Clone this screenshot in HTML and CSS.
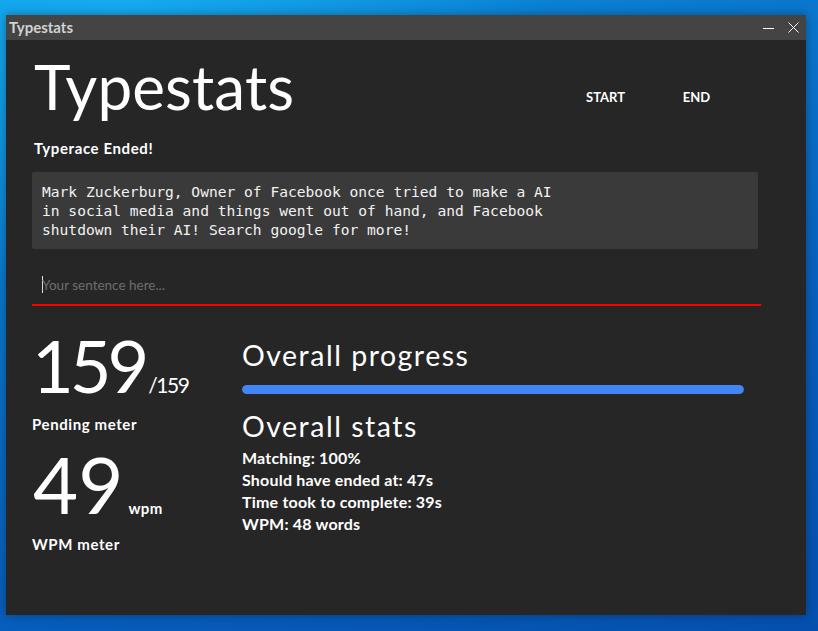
FILE: index.html
```html
<!DOCTYPE html>
<html lang="en">
<head>
<meta charset="utf-8">
<title>Typestats</title>
<link rel="stylesheet" href="styles.css">
</head>
<body>
<div class="window">
  <div class="titlebar">
    <span class="titlebar-text">Typestats</span>
    <div class="controls">
      <svg class="ctl" width="11" height="11" viewBox="0 0 11 11"><line x1="0" y1="6.5" x2="11" y2="6.5" stroke="#fff" stroke-width="1"/></svg>
      <svg class="ctl" width="11" height="11" viewBox="0 0 11 11"><path d="M0.5 0.5 L10.5 10.5 M10.5 0.5 L0.5 10.5" stroke="#fff" stroke-width="1" fill="none"/></svg>
    </div>
  </div>
  <div class="content">
    <header class="header">
      <h1 class="app-title">Typestats</h1>
      <nav class="nav">
        <span class="nav-btn">START</span>
        <span class="nav-btn">END</span>
      </nav>
    </header>
    <p class="status">Typerace Ended!</p>
    <div class="sentence-box">
      <p class="sentence">Mark Zuckerburg, Owner of Facebook once tried to make a AI in social media and things went out of hand, and Facebook shutdown their AI! Search google for more!</p>
    </div>
    <div class="input-row">
      <span class="caret"></span><span class="placeholder">Your sentence here...</span>
    </div>
    <section class="stats">
      <div class="meters">
        <div class="meter-value"><span class="big big-pending">159</span><span class="small-unit">/159</span></div>
        <div class="meter-label">Pending meter</div>
        <div class="meter-value meter-wpm"><span class="big big-wpm">49</span><span class="wpm-unit">wpm</span></div>
        <div class="meter-label">WPM meter</div>
      </div>
      <div class="overall">
        <h2 class="section-title">Overall progress</h2>
        <div class="progress"><div class="progress-fill" style="width:100%"></div></div>
        <h2 class="section-title title-stats">Overall stats</h2>
        <ul class="stat-list">
          <li>Matching: 100%</li>
          <li>Should have ended at: 47s</li>
          <li>Time took to complete: 39s</li>
          <li>WPM: 48 words</li>
        </ul>
      </div>
    </section>
  </div>
</div>
</body>
</html>
```
FILE: styles.css
```css
* { box-sizing: border-box; }
html, body { margin: 0; padding: 0; }
body {
  width: 818px;
  height: 631px;
  overflow: hidden;
  font-family: Lato, "Open Sans", sans-serif;
  background:
    radial-gradient(ellipse 420px 300px at 120px 0px, rgba(30,190,255,0.55), rgba(30,190,255,0) 100%),
    linear-gradient(160deg, #0c98e2 0%, #0a78cf 30%, #075fbd 65%, #0550ae 100%);
  padding: 15px 0 0 6px;
}
.window {
  width: 800px;
  height: 600px;
  background: #262626;
  box-shadow: 0 0 10px rgba(0,0,0,0.35);
  display: flex;
  flex-direction: column;
}
.titlebar {
  height: 25px;
  background: #444444;
  display: flex;
  align-items: center;
  padding: 0 7px 0 3px;
  flex: none;
}
.titlebar-text {
  color: #d2d2d2;
  font-weight: 700;
  font-size: 15px;
  line-height: 25px;
}
.controls {
  margin-left: auto;
  display: flex;
  align-items: center;
  gap: 14px;
}
.ctl { display: block; }
.content {
  padding: 15px 45px 0 26px;
  color: #fff;
}
.header {
  display: flex;
  align-items: flex-start;
}
.app-title {
  margin: 0 0 0 2px;
  font-size: 62px;
  font-weight: 400;
  line-height: 62px;
  letter-spacing: 0.1px;
}
.nav {
  margin-left: auto;
  margin-right: 19px;
  margin-top: 34px;
  display: flex;
}
.nav-btn {
  width: 91px;
  text-align: center;
  font-size: 13px;
  font-weight: 700;
  line-height: 16px;
}
.status {
  margin: 22px 0 0 2px;
  font-size: 15px;
  font-weight: 700;
  line-height: 18px;
  letter-spacing: 0.6px;
}
.sentence-box {
  margin: 15px 3px 0 0;
  background: #3a3a3a;
  border-radius: 2px;
  padding: 10px 10px;
  height: 77px;
}
.sentence {
  margin: 0;
  max-width: 59ch;
  font-family: "DejaVu Sans Mono", "Liberation Mono", monospace;
  font-size: 14.6px;
  line-height: 19px;
  color: #f2f2f2;
}
.input-row {
  margin-top: 16px;
  height: 41px;
  border-bottom: 2px solid #ff0000;
  display: flex;
  align-items: center;
  padding: 0 0 0 10px;
}
.caret {
  width: 1px;
  height: 17px;
  background: #ddd;
  margin-right: -1px;
}
.placeholder {
  color: #6e6e6e;
  font-size: 13.5px;
}
.stats {
  display: flex;
}
.meters {
  width: 210px;
  flex: none;
}
.meter-value {
  margin-top: 23px;
  display: flex;
  align-items: baseline;
}
.big {
  font-weight: 400;
  line-height: 1;
}
.big-pending {
  font-size: 72px;
  letter-spacing: -4px;
}
.small-unit {
  font-size: 21px;
  margin-left: 3px;
  letter-spacing: -1.5px;
}
.meter-wpm { margin-top: 12px; }
.big-wpm {
  font-size: 78px;
  letter-spacing: 0;
  margin-left: 1px;
}
.wpm-unit {
  font-size: 15px;
  font-weight: 700;
  margin-left: 5px;
  letter-spacing: 0.3px;
}
.meter-label {
  margin-top: 14px;
  font-size: 15px;
  font-weight: 700;
  line-height: 18px;
  letter-spacing: 0.6px;
}
.meters .meter-label:last-child { margin-top: 12px; }
.overall {
  width: 502px;
}
.section-title {
  margin: 33px 0 0;
  font-size: 28.5px;
  font-weight: 400;
  line-height: 33.6px;
  letter-spacing: 1.5px;
}
.title-stats { margin-top: 16px; }
.progress {
  margin-top: 12px;
  height: 9px;
  border-radius: 5px;
  background: #3a3a3a;
  overflow: hidden;
}
.progress-fill {
  height: 100%;
  background: #4285f4;
  border-radius: 5px;
}
.stat-list {
  list-style: none;
  margin: 4px 0 0;
  padding: 0;
  font-size: 16px;
  font-weight: 700;
  line-height: 22px;
  letter-spacing: 0.2px;
}
```
